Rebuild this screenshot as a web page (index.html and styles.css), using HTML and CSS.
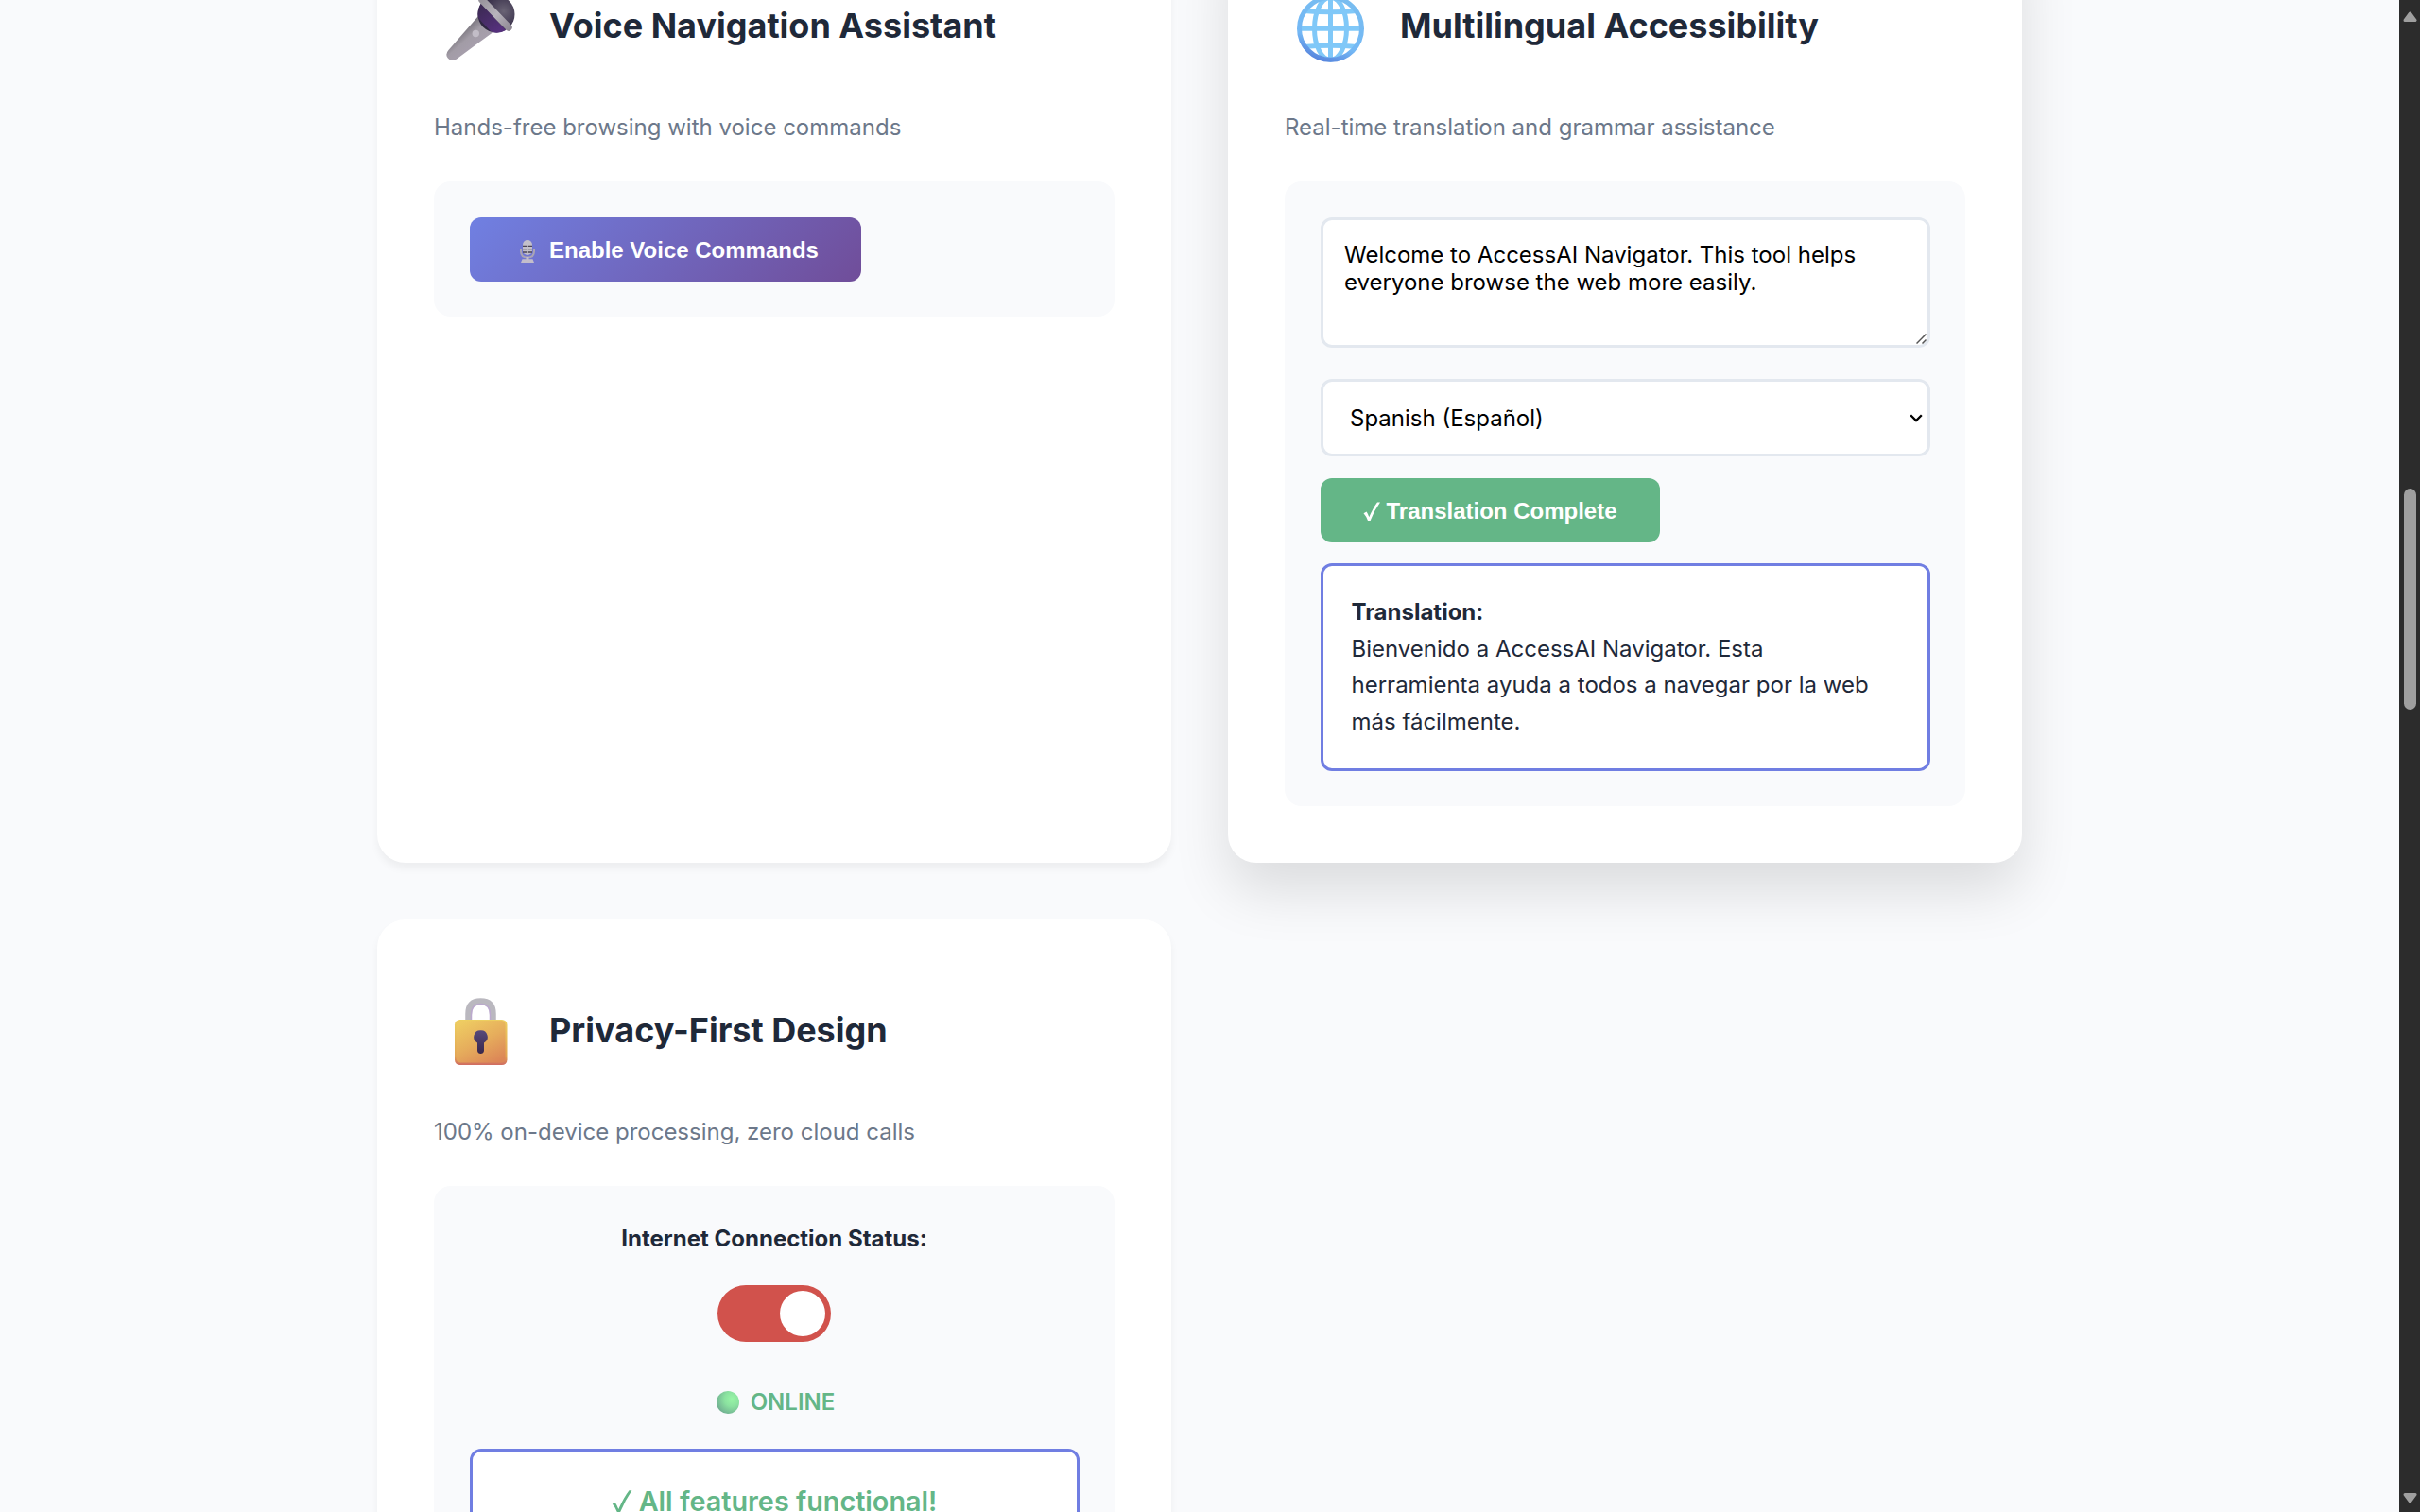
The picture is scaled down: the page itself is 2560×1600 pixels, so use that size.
FILE: index.html
```html
<!DOCTYPE html>
<html lang="en">
<head>
  <meta charset="UTF-8">
  <title>AccessAI Navigator</title>
  <meta name="viewport" content="width=device-width, initial-scale=1.0">
  <link rel="stylesheet" href="styles.css">
</head>
<body>
  <main class="page">
    <div class="features-grid">

      <!-- Voice -->
      <section class="feature-card">
        <div class="feature-header">
          <svg class="feature-icon" viewBox="0 0 98 115">
            <defs>
              <linearGradient id="micBody" gradientUnits="userSpaceOnUse" x1="28" y1="62" x2="44" y2="80">
                <stop offset="0" stop-color="#77737b"/>
                <stop offset="0.45" stop-color="#a29ca6"/>
                <stop offset="1" stop-color="#a79fad"/>
              </linearGradient>
              <radialGradient id="micHead" cx="0.7" cy="0.42" r="0.6">
                <stop offset="0" stop-color="#6a6475"/>
                <stop offset="0.6" stop-color="#453d55"/>
                <stop offset="1" stop-color="#2f2742"/>
              </radialGradient>
              <linearGradient id="micNeck" x1="0" y1="0" x2="0.6" y2="1">
                <stop offset="0" stop-color="#38294e"/>
                <stop offset="1" stop-color="#55307c"/>
              </linearGradient>
              <linearGradient id="micRing" gradientUnits="userSpaceOnUse" x1="50" y1="30" x2="80" y2="60">
                <stop offset="0" stop-color="#98949c"/>
                <stop offset="0.5" stop-color="#b8b4bc"/>
                <stop offset="1" stop-color="#8f8994"/>
              </linearGradient>
            </defs>
            <path d="M47 46 L62 63.500 L24 91.500 Q18.500 95 14.800 90.500 Q11.500 86.500 15.500 82 Z" fill="url(#micBody)"/>
            <circle cx="66" cy="44" r="19.500" fill="url(#micHead)"/>
            <path d="M50 32 Q45 41 47 48 L60 62 Q67 66 76 61 Z" fill="url(#micNeck)"/>
            <path d="M51 29 L79 58" stroke="url(#micRing)" stroke-width="7.500" stroke-linecap="round"/>
            <circle cx="44.300" cy="64.500" r="3.700" fill="#c2bdc7"/>
          </svg>
          <h3 class="feature-title">Voice Navigation Assistant</h3>
        </div>
        <p class="feature-description">Hands-free browsing with voice commands</p>
        <div class="feature-demo">
          <button class="demo-button">
            <svg class="button-mic" viewBox="0 0 33 28">
              <path d="M9 12.500 V15 Q9 21.500 16 21.500 Q23 21.500 23 15 V12.500" fill="none" stroke="#aaa5b5" stroke-width="2"/>
              <rect x="11" y="3" width="10" height="16" rx="5" fill="#c3bfca"/>
              <path d="M11 9.300 H21 M11 12.700 H21 M11 16 H21" stroke="#4b4555" stroke-width="1.300"/>
              <path d="M16 8 V17" stroke="#c3bfca" stroke-width="1.500"/>
              <path d="M14.500 21 H17.500 V23.300 H21.500 L23 27 H9 L10.500 23.300 H14.500 Z" fill="#c3becb"/>
            </svg>
            Enable Voice Commands
          </button>
        </div>
      </section>

      <!-- Translation -->
      <section class="feature-card active">
        <div class="feature-header">
          <svg class="feature-icon" viewBox="0 0 98 115">
            <defs>
              <linearGradient id="globeLine" gradientUnits="userSpaceOnUse" x1="62" y1="26" x2="38" y2="94">
                <stop offset="0" stop-color="#78bdf0"/>
                <stop offset="0.700" stop-color="#74b8f5"/>
                <stop offset="1" stop-color="#5683dc"/>
              </linearGradient>
            </defs>
            <g fill="none" stroke="#80c8f8" stroke-width="5">
              <ellipse cx="48.500" cy="59.300" rx="17" ry="33"/>
              <path d="M48.500 26 V92"/>
              <path d="M15 59.300 H82"/>
              <path d="M20 40.500 Q48.500 43 77 40.500"/>
              <path d="M20 78.500 Q48.500 76 77 78.500"/>
            </g>
            <circle cx="48.500" cy="59.300" r="33" fill="none" stroke="url(#globeLine)" stroke-width="5"/>
          </svg>
          <h3 class="feature-title">Multilingual Accessibility</h3>
        </div>
        <p class="feature-description">Real-time translation and grammar assistance</p>
        <div class="feature-demo">
          <div class="field">
            <textarea class="demo-input">Welcome to AccessAI Navigator. This tool helps everyone browse the web more easily.</textarea>
            <svg class="resize-grip" viewBox="0 0 11 11"><path d="M0.500 10.500 L10.500 0.500 M6.500 10.500 L10.500 6.500"/></svg>
          </div>
          <div class="field">
            <select class="language-select">
              <option>Spanish (Español)</option>
            </select>
            <svg class="select-arrow" viewBox="0 0 14 9"><path d="M1.200 1.200 L7 7 L12.800 1.200"/></svg>
          </div>
          <button class="demo-button success">
            <svg class="check" viewBox="0 0 20 22"><path d="M0.500 13.200 L3.600 11.600 Q5.300 14.300 6.300 17.300 Q10.500 7.500 15 1.500 L18 1.500 Q11.500 10.500 7.600 21 L5 21 Q3.500 16.500 0.500 13.200 Z"/></svg>
            Translation Complete
          </button>
          <div class="demo-result">
            <strong>Translation:</strong><br>
            Bienvenido a AccessAI Navigator. Esta herramienta ayuda a todos a navegar por la web más fácilmente.
          </div>
        </div>
      </section>

      <!-- Privacy -->
      <section class="feature-card">
        <div class="feature-header">
          <svg class="feature-icon" viewBox="0 0 98 115">
            <defs>
              <linearGradient id="lockBody" x1="0.200" y1="0" x2="0.800" y2="1">
                <stop offset="0" stop-color="#eecb62"/>
                <stop offset="0.500" stop-color="#e6ad5c"/>
                <stop offset="1" stop-color="#dc8657"/>
              </linearGradient>
              <linearGradient id="lockEdge" x1="0" y1="0" x2="0" y2="1">
                <stop offset="0" stop-color="#edcf60"/>
                <stop offset="0.800" stop-color="#e2a552"/>
                <stop offset="1" stop-color="#d06c62"/>
              </linearGradient>
              <linearGradient id="keyhole" x1="0" y1="0" x2="0" y2="1">
                <stop offset="0" stop-color="#57497b"/>
                <stop offset="1" stop-color="#38274b"/>
              </linearGradient>
            </defs>
            <path d="M36.500 48 V40 Q36.500 26.500 49.500 26.500 Q62.500 26.500 62.500 40 V48" fill="none" stroke="#bab8bf" stroke-width="6.500"/>
            <path d="M39.500 48 V41 Q39.500 29.500 49.500 29.500 Q59.500 29.500 59.500 41 V48" fill="none" stroke="#bba9cd" stroke-width="1.500"/>
            <rect x="22" y="46" width="55.500" height="48" rx="5.500" fill="url(#lockEdge)"/>
            <rect x="23.500" y="47" width="52" height="44.500" rx="4.500" fill="url(#lockBody)"/>
            <path d="M49.500 57.300 A7 7 0 0 1 53 70.500 V79 Q52.500 82 49.500 82 Q46.500 82 46 79 V70.500 A7 7 0 0 1 49.500 57.300 Z" fill="url(#keyhole)"/>
          </svg>
          <h3 class="feature-title">Privacy-First Design</h3>
        </div>
        <p class="feature-description">100% on-device processing, zero cloud calls</p>
        <div class="feature-demo centered">
          <p class="status-label">Internet Connection Status:</p>
          <div class="toggle"><span class="toggle-knob"></span></div>
          <div class="status-indicator"><span class="status-dot"></span>ONLINE</div>
          <div class="demo-result">
            <p class="result-headline">
              <svg class="check" viewBox="0 0 20 22"><path d="M0.500 13.200 L3 11.800 Q4.800 14.300 6 17.800 Q10.500 7.500 15.500 1 L18 1 Q11.500 10.500 7.300 21 L5 21 Q3.500 16.500 0.500 13.200 Z"/></svg>
              All features functional!
            </p>
          </div>
        </div>
      </section>

    </div>
  </main>

  <div class="scrollbar">
    <svg class="scroll-arrow" viewBox="0 0 15 12"><path d="M7.500 2 L13 9.500 H2 Z"/></svg>
    <div class="scroll-thumb"></div>
    <svg class="scroll-arrow down" viewBox="0 0 15 12"><path d="M7.500 10 L13 2.500 H2 Z"/></svg>
  </div>
</body>
</html>
```
FILE: styles.css
```css
* {
  margin: 0;
  padding: 0;
  box-sizing: border-box;
}

body {
  display: flex;
  height: 1600px;
  overflow: hidden;
  font-family: Inter, sans-serif;
  font-size: 24px;
  line-height: 1.6;
  color: #1f2939;
  background: #f9fafc;
}

.page {
  flex: 1;
}

/* page is scrolled part way into the first row */
.features-grid {
  display: grid;
  grid-template-columns: 1fr 1fr;
  grid-template-rows: 1002.5px auto;
  gap: 60px;
  width: 1740px;
  margin: -89.5px auto 0;
}

.feature-card {
  background: #fff;
  border-radius: 30px;
  padding: 60px;
  box-shadow: 0 6px 9px rgba(0, 0, 0, 0.05);
}

.feature-card.active {
  box-shadow: 0 30px 60px rgba(0, 0, 0, 0.12);
}

.feature-header {
  display: flex;
  align-items: center;
  gap: 24px;
  margin-bottom: 30.5px;
}

.feature-icon {
  width: 98px;
  height: 115px;
}

.feature-title {
  font-size: 36px;
  font-weight: 700;
}

.feature-description {
  color: #6c788a;
  margin-bottom: 38px;
}

.feature-demo {
  background: #f9fafc;
  border-radius: 18px;
  padding: 37.5px;
}

.demo-button {
  display: flex;
  align-items: center;
  height: 68px;
  padding: 2px 45px 0;
  border: none;
  border-radius: 12px;
  font-family: "Liberation Sans", Arial, sans-serif;
  font-size: 24px;
  font-weight: 700;
  color: #fff;
  background: linear-gradient(135deg, #7080e2 0%, #704d99 100%);
}

.demo-button.success {
  background: #64b687;
  margin-bottom: 22.5px;
}

.button-mic {
  width: 33px;
  height: 28px;
  margin-right: 6.5px;
}

.check {
  width: 20px;
  height: 22px;
  margin-right: 5px;
  fill: currentColor;
}

.field {
  position: relative;
}

.demo-input {
  display: block;
  width: 100%;
  height: 138px;
  padding: 22.5px;
  border: 3px solid #e3e8ef;
  border-radius: 12px;
  font-family: inherit;
  font-size: 24px;
  resize: none;
  margin-bottom: 33px;
}

.resize-grip {
  position: absolute;
  right: 4px;
  bottom: 4px;
  width: 11px;
  height: 11px;
  fill: none;
  stroke: #555;
  stroke-width: 1.5;
}

.language-select {
  display: block;
  appearance: none;
  width: 100%;
  height: 82px;
  padding: 2px 28.5px 0;
  border: 3px solid #e3e8ef;
  border-radius: 12px;
  font-family: inherit;
  font-size: 24px;
  color: #000;
  background: #fff;
  margin-bottom: 23px;
}

.select-arrow {
  position: absolute;
  right: 8px;
  top: 37px;
  width: 14px;
  height: 9px;
  fill: none;
  stroke: #000;
  stroke-width: 2.3;
}

.demo-result {
  padding: 30px;
  border: 3px solid #707ee2;
  border-radius: 12px;
  background: #fff;
}

.centered {
  text-align: center;
}

.status-label {
  font-weight: 700;
}

.toggle {
  display: flex;
  justify-content: flex-end;
  width: 120px;
  height: 60px;
  margin: 29px auto 45px;
  padding: 6px;
  border-radius: 30px;
  background: #d1524c;
}

.toggle-knob {
  width: 48px;
  height: 48px;
  border-radius: 50%;
  background: #fff;
}

.status-indicator {
  display: flex;
  align-items: center;
  justify-content: center;
  gap: 12px;
  margin-bottom: 30px;
  padding-left: 3px;
  font-weight: 600;
  color: #64b687;
}

.status-dot {
  width: 24px;
  height: 24px;
  border-radius: 50%;
  background: radial-gradient(circle at 68% 35%, #98f5a6 0%, #8be2a0 35%, #75b894 70%, #638f84 100%);
}

.result-headline {
  display: flex;
  align-items: center;
  justify-content: center;
  font-size: 28.8px;
  font-weight: 600;
  color: #64b687;
}

.result-headline .check {
  width: 24px;
  height: 26px;
}

.scrollbar {
  display: flex;
  flex-direction: column;
  align-items: center;
  width: 22px;
  padding: 12px 0 9px;
  background: #2c2c2c;
}

.scroll-arrow {
  width: 15px;
  height: 12px;
  fill: #9f9f9f;
  stroke: #9f9f9f;
  stroke-width: 3;
  stroke-linejoin: round;
}

.scroll-thumb {
  width: 13px;
  height: 234px;
  margin-top: 493px;
  border-radius: 7px;
  background: #9f9f9f;
}

.scroll-arrow.down {
  margin-top: auto;
}
```
